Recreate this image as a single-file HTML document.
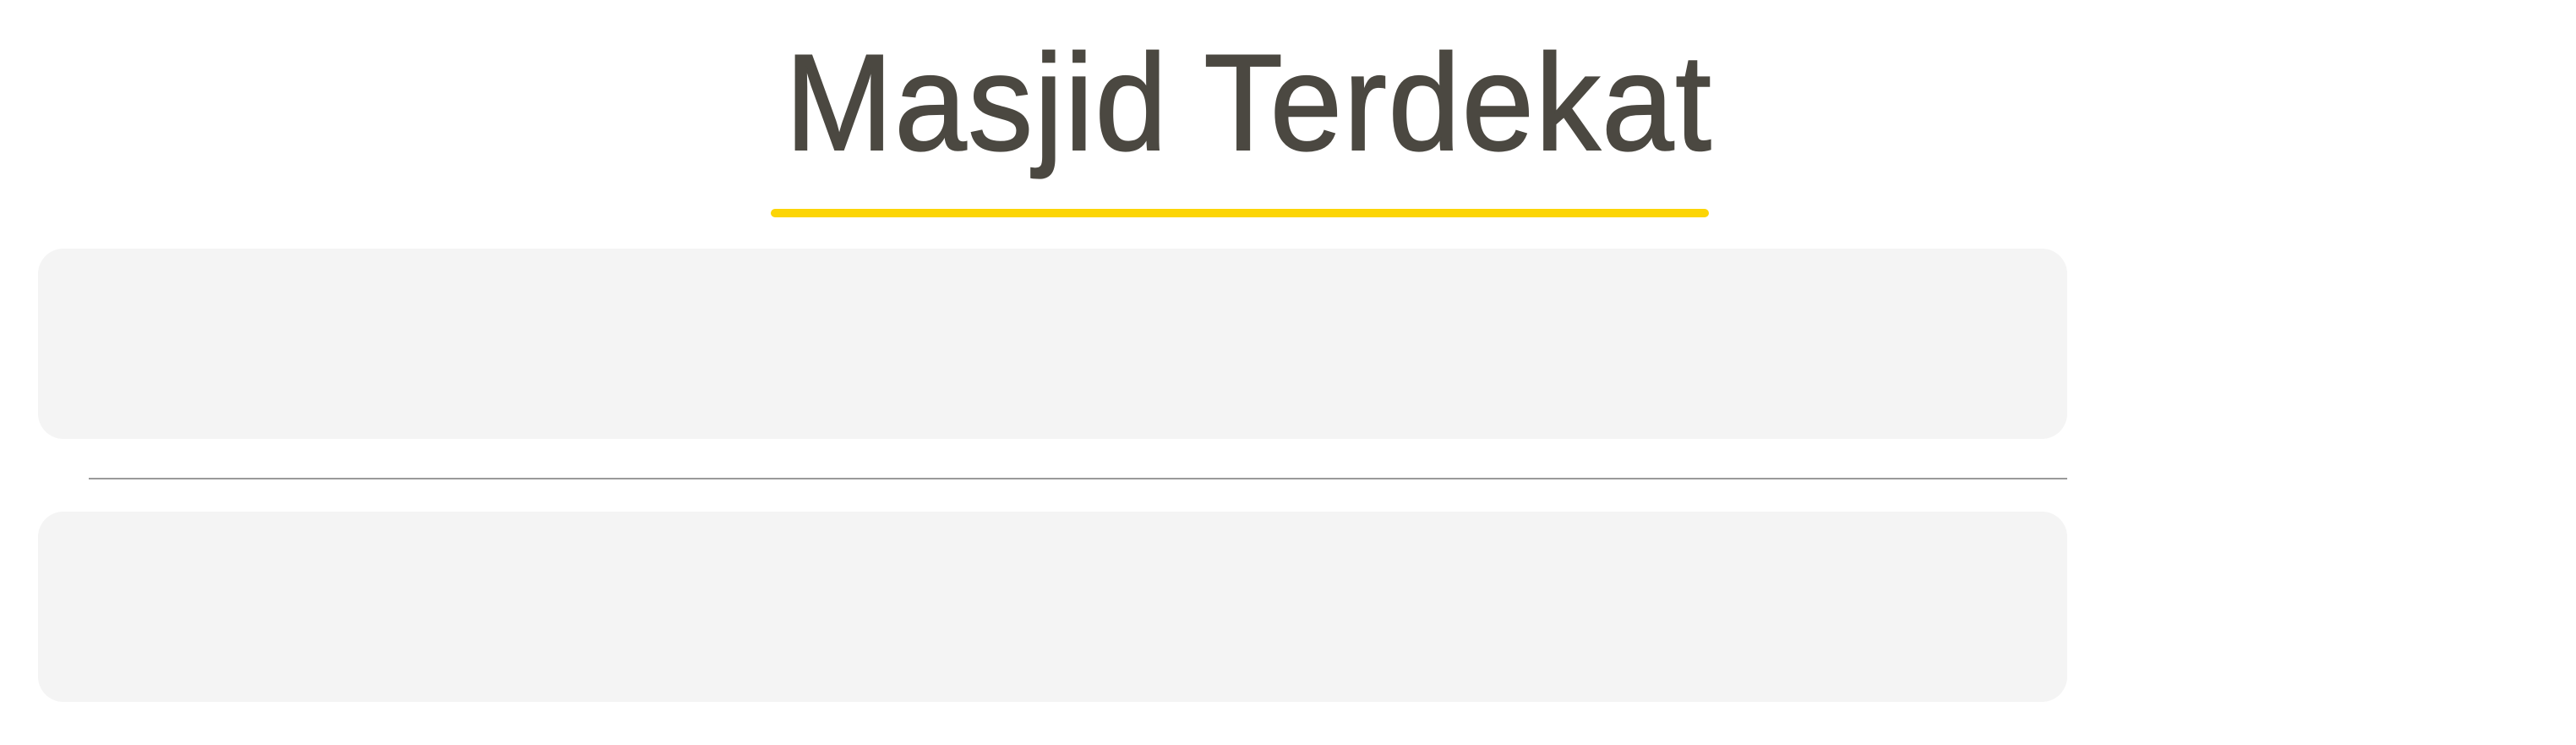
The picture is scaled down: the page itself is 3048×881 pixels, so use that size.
<!DOCTYPE html>
<html><head><meta charset="utf-8"><style>
html,body{margin:0;padding:0;background:#fff;width:3048px;height:881px;overflow:hidden;position:relative;font-family:"Liberation Sans",sans-serif}
.t{position:absolute;left:929px;top:40px;width:1100px;height:170px;}
.t span{position:absolute;left:0;top:0;font-size:162px;line-height:164px;color:#4b4841;white-space:nowrap;transform-origin:0 0;transform:scaleX(0.945);letter-spacing:2px;-webkit-text-stroke:2px #4b4841}
.bar{position:absolute;left:912px;top:247px;width:1110px;height:10px;border-radius:5px;background:#fcd505}
.card{position:absolute;left:45px;width:2401px;height:225px;border-radius:30px;background:#f4f4f4}
.hr{position:absolute;left:105px;top:565px;width:2341px;height:2px;background:#9a9a9a}
</style></head><body>
<div class="t"><span>Masjid Terdekat</span></div>
<div class="bar"></div>
<div class="card" style="top:294px"></div>
<div class="hr"></div>
<div class="card" style="top:605px"></div>
</body></html>
